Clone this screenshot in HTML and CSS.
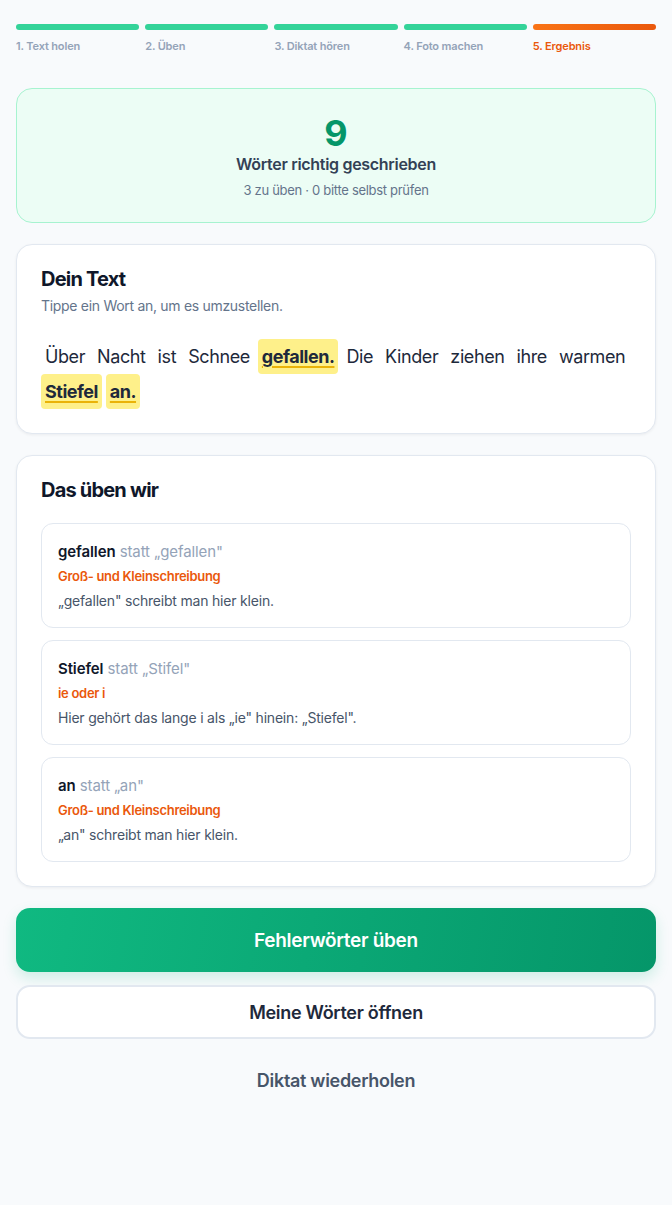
FILE: index.html
```html
<!DOCTYPE html>
<html lang="de">
<head>
<meta charset="utf-8">
<title>Ergebnis</title>
<link rel="stylesheet" href="styles.css">
</head>
<body>
<div class="page">
  <div class="steps">
    <div class="step done"><div class="bar"></div><div class="label">1. Text holen</div></div>
    <div class="step done"><div class="bar"></div><div class="label">2. Üben</div></div>
    <div class="step done"><div class="bar"></div><div class="label">3. Diktat hören</div></div>
    <div class="step done"><div class="bar"></div><div class="label">4. Foto machen</div></div>
    <div class="step active"><div class="bar"></div><div class="label">5. Ergebnis</div></div>
  </div>

  <section class="score">
    <div class="score-num">9</div>
    <div class="score-title">Wörter richtig geschrieben</div>
    <div class="score-sub">3 zu üben · 0 bitte selbst prüfen</div>
  </section>

  <section class="card first">
    <h2 class="card-title">Dein Text</h2>
    <p class="card-sub">Tippe ein Wort an, um es umzustellen.</p>
    <div class="words">
      <span class="word">Über</span>
      <span class="word">Nacht</span>
      <span class="word">ist</span>
      <span class="word">Schnee</span>
      <span class="word wrong">gefallen.</span>
      <span class="word">Die</span>
      <span class="word">Kinder</span>
      <span class="word">ziehen</span>
      <span class="word">ihre</span>
      <span class="word">warmen</span>
      <span class="word wrong">Stiefel</span>
      <span class="word wrong">an.</span>
    </div>
  </section>

  <section class="card">
    <h2 class="card-title practice">Das üben wir</h2>
    <div class="items">
      <div class="item">
        <div class="item-head"><b>gefallen</b> <span class="statt">statt „gefallen"</span></div>
        <div class="item-cat">Groß- und Kleinschreibung</div>
        <div class="item-text">„gefallen" schreibt man hier klein.</div>
      </div>
      <div class="item">
        <div class="item-head"><b>Stiefel</b> <span class="statt">statt „Stifel"</span></div>
        <div class="item-cat">ie oder i</div>
        <div class="item-text">Hier gehört das lange i als „ie" hinein: „Stiefel".</div>
      </div>
      <div class="item">
        <div class="item-head"><b>an</b> <span class="statt">statt „an"</span></div>
        <div class="item-cat">Groß- und Kleinschreibung</div>
        <div class="item-text">„an" schreibt man hier klein.</div>
      </div>
    </div>
  </section>

  <div class="actions">
    <button class="btn primary">Fehlerwörter üben</button>
    <button class="btn secondary">Meine Wörter öffnen</button>
    <button class="btn ghost">Diktat wiederholen</button>
  </div>
</div>
</body>
</html>
```

FILE: styles.css
```css
* { box-sizing: border-box; }
html, body { margin: 0; padding: 0; }
body {
  background: #f8fafc;
  font-family: Inter, "Noto Sans", "Liberation Sans", sans-serif;
  color: #1e293b;
  width: 672px;
  min-height: 1205px;
}
.page {
  padding: 24px 16px 40px;
}
.steps {
  display: flex;
  gap: 6px;
}
.step { flex: 1; }
.bar {
  height: 6px;
  border-radius: 3px;
  background: #34d399;
}
.step.active .bar { background: linear-gradient(90deg, #f97316, #ea580c); }
.label {
  margin-top: 8px;
  font-size: 11px;
  line-height: 16px;
  font-weight: 600;
  color: #94a3b8;
  letter-spacing: -0.15px;
}
.step.active .label { color: #ea580c; }

.score {
  margin-top: 34px;
  background: #ecfdf5;
  border: 1px solid #a7f3d0;
  border-radius: 16px;
  padding: 24px 24px 23px;
  text-align: center;
}
.score-num {
  font-size: 36px;
  line-height: 40px;
  font-weight: 700;
  color: #059669;
}
.score-title {
  font-size: 16px;
  line-height: 22px;
  font-weight: 600;
  color: #334155;
  letter-spacing: -0.3px;
}
.score-sub {
  margin-top: 6px;
  font-size: 13px;
  line-height: 18px;
  color: #64748b;
  letter-spacing: -0.3px;
}

.card {
  margin-top: 21px;
  background: #fff;
  border: 1px solid #e2e8f0;
  border-radius: 16px;
  padding: 24px;
  box-shadow: 0 1px 3px rgba(15, 23, 42, 0.06);
}
.card-title {
  margin: 0;
  font-size: 20px;
  line-height: 20px;
  font-weight: 700;
  color: #0f172a;
  letter-spacing: -0.8px;
}
.card-sub {
  margin: 7px 0 0;
  font-size: 14px;
  line-height: 20px;
  color: #64748b;
  letter-spacing: -0.3px;
}
.words {
  margin-top: 23px;
  display: flex;
  flex-wrap: wrap;
  gap: 0 4px;
}
.word {
  padding: 6px 4px;
  font-size: 18px;
  line-height: 23px;
  color: #1e293b;
  border-radius: 4px;
  letter-spacing: -0.4px;
}
.word.wrong {
  background: #fef08a;
  font-weight: 700;
  text-decoration: underline;
  text-decoration-color: #eab308;
  text-decoration-thickness: 2px;
  text-underline-offset: 3px;
  letter-spacing: -0.5px;
}

.card-title.practice { margin-bottom: 23px; }
.items {
  display: flex;
  flex-direction: column;
  gap: 12px;
}
.item {
  border: 1px solid #e2e8f0;
  border-radius: 12px;
  padding: 16px;
}
.item-head {
  font-size: 15px;
  line-height: 23px;
  color: #0f172a;
  letter-spacing: -0.1px;
}
.item-head b { font-weight: 600; }
.statt { color: #94a3b8; }
.item-cat {
  margin-top: 4px;
  font-size: 13px;
  line-height: 18px;
  font-weight: 600;
  color: #ea580c;
  letter-spacing: -0.3px;
}
.item-text {
  margin-top: 6px;
  font-size: 14px;
  line-height: 20px;
  color: #475569;
  letter-spacing: -0.2px;
}

.actions {
  margin-top: 21px;
  display: flex;
  flex-direction: column;
}
.btn {
  font-family: inherit;
  display: block;
  width: 100%;
  border-radius: 14px;
  font-weight: 600;
  letter-spacing: -0.3px;
  cursor: pointer;
}
.primary {
  height: 64px;
  border: none;
  background: linear-gradient(100deg, #10b981, #059669);
  color: #fff;
  font-size: 19px;
  box-shadow: 0 6px 14px rgba(16, 185, 129, 0.18);
}
.secondary {
  margin-top: 13px;
  height: 54px;
  background: #fff;
  border: 2px solid #e2e8f0;
  color: #1e293b;
  font-size: 18px;
}
.ghost {
  margin-top: 14px;
  height: 54px;
  background: transparent;
  border: none;
  color: #475569;
  font-size: 18px;
}
```
